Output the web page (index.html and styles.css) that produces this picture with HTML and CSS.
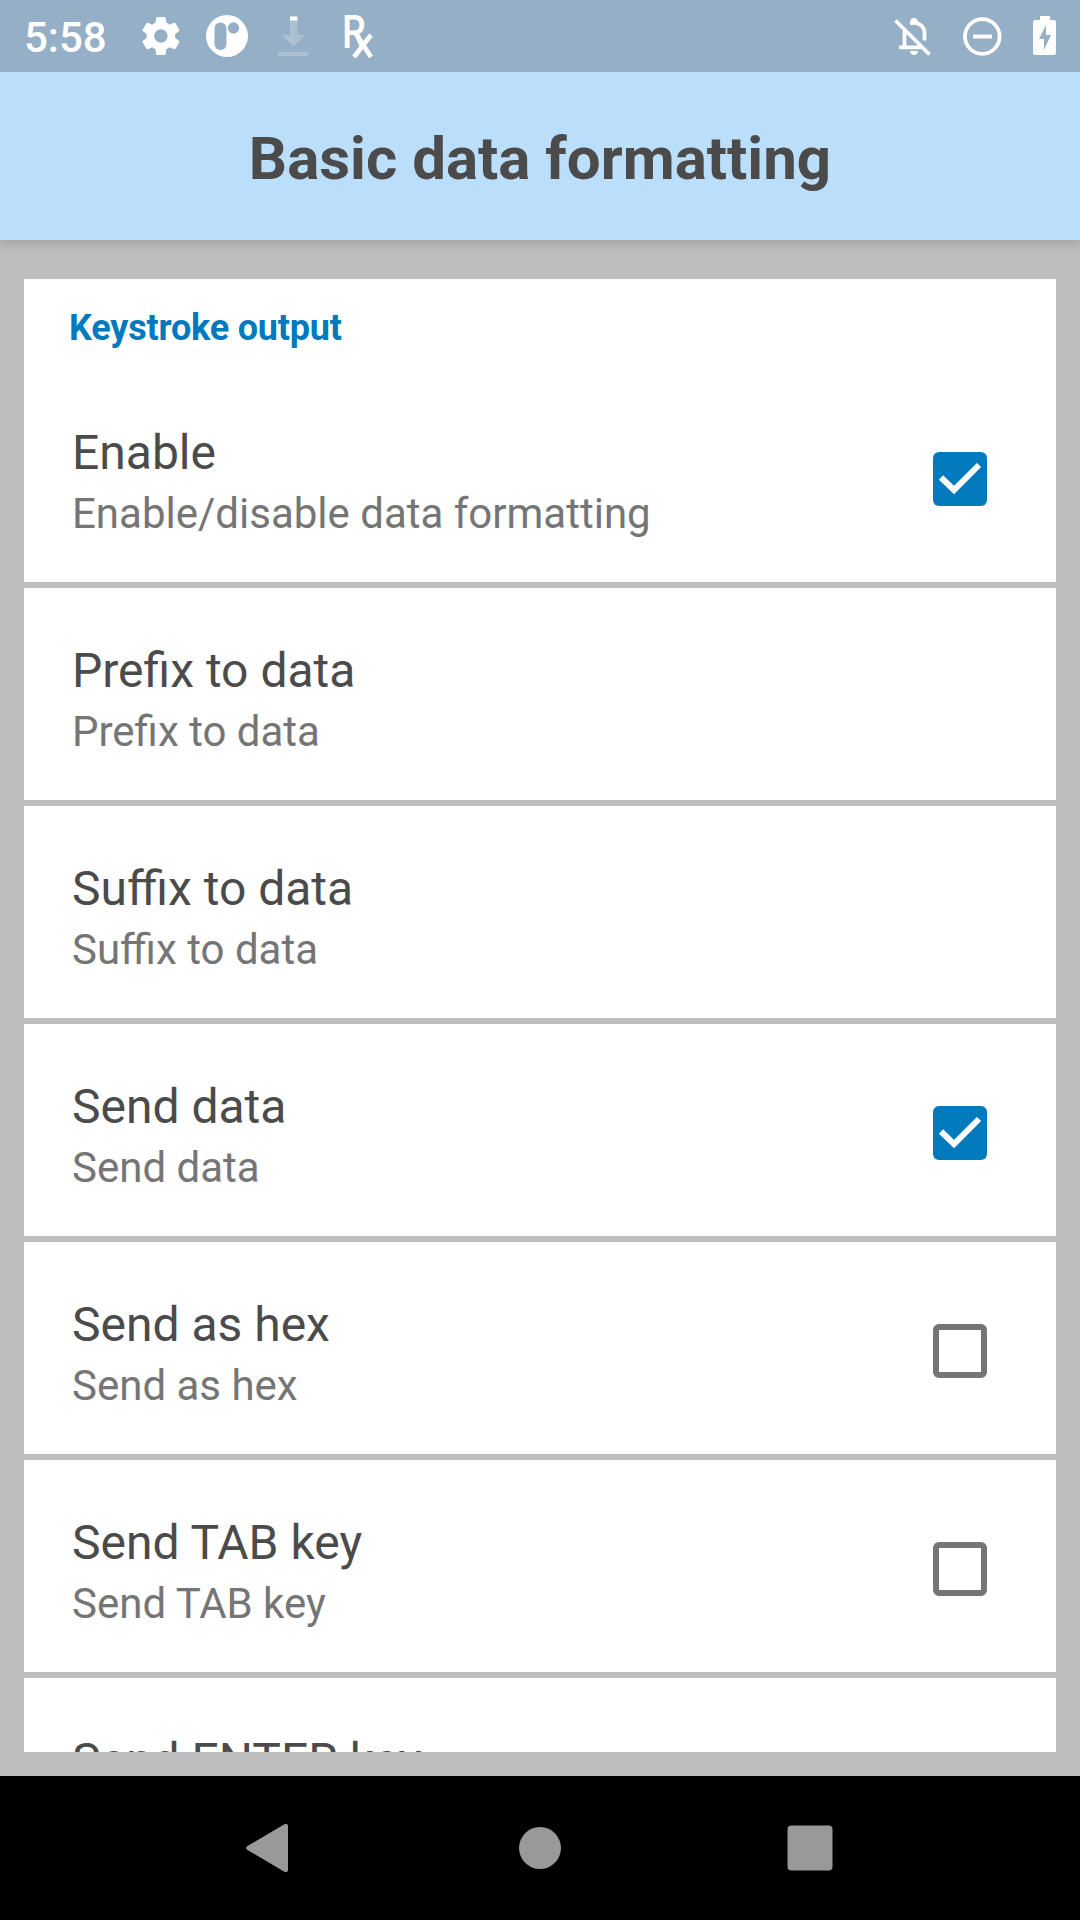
FILE: index.html
```html
<!DOCTYPE html>
<html lang="en">
<head>
<meta charset="utf-8">
<title>Basic data formatting</title>
<link rel="stylesheet" href="styles.css">
</head>
<body>
<div class="screen">
  <header class="status">
    <span class="clock">5:58</span>
    <svg class="tray" width="250" height="72" viewBox="132 0 250 72" aria-hidden="true">
      <path class="fill" transform="translate(138.1 13.2) scale(1.9)" d="M19.43 12.98c.04-.32.07-.64.07-.98s-.03-.66-.07-.98l2.11-1.65c.19-.15.24-.42.12-.64l-2-3.46c-.12-.22-.39-.3-.61-.22l-2.49 1c-.52-.4-1.08-.73-1.69-.98l-.38-2.65C14.46 2.18 14.25 2 14 2h-4c-.25 0-.46.18-.49.42l-.38 2.65c-.61.25-1.17.59-1.69.98l-2.49-1c-.23-.09-.49 0-.61.22l-2 3.46c-.13.22-.07.49.12.64l2.11 1.65c-.04.32-.07.65-.07.98s.03.66.07.98l-2.11 1.65c-.19.15-.24.42-.12.64l2 3.46c.12.22.39.3.61.22l2.49-1c.52.4 1.08.73 1.69.98l.38 2.65c.03.24.24.42.49.42h4c.25 0 .46-.18.49-.42l.38-2.65c.61-.25 1.17-.59 1.69-.98l2.49 1c.23.09.49 0 .61-.22l2-3.46c.12-.22.07-.49-.12-.64l-2.11-1.65zM12 15.5c-1.93 0-3.5-1.57-3.5-3.5s1.57-3.5 3.5-3.5 3.5 1.57 3.5 3.5-1.57 3.5-3.5 3.5z"/>
      <circle class="fill" cx="227" cy="36" r="21"/>
      <rect class="hole" x="214.5" y="22.5" width="12" height="27.5" rx="6"/>
      <circle class="hole" cx="233.5" cy="28" r="5.7"/>
      <path class="faint" d="M290 20h7.500v15h7.500L293.500 46 282 35h8zM278.500 52h29.500v4h-29.500z"/>
      <path class="fill" d="M290 16.500h7.500v4H290z"/>
      <text class="rx" x="342" y="48" font-size="46" textLength="24" lengthAdjust="spacingAndGlyphs">R</text>
      <path class="cross" d="m354.500 31.500 16.500 25.500M371 35l-17 22"/>
    </svg>
    <svg class="tray-end" width="180" height="72" viewBox="890 0 180 72" aria-hidden="true">
      <path class="line" d="M904.500 47V33q0-2 .8-4M899 47.300h23M910 23.500c9-2.500 14.500 3 14.500 10v7"/>
      <path class="line" d="m895.500 20.500 34 34"/>
      <path class="fill" d="M910.500 23v-2a3.500 3 0 0 1 7 0v3zM910 51h8q-.5 4-4 4t-4-4z"/>
      <circle class="line" cx="982.3" cy="36.5" r="17.3"/>
      <path class="fill" d="M973 34.500h19v4h-19z"/>
      <path class="fill" fill-rule="evenodd" d="M1040 16h10v4h4q2 0 2 2v31q0 2-2 2h-19q-2 0-2-2V22q0-2 2-2h5zM1046 25l-7 14h5v11l7-15h-5z"/>
    </svg>
  </header>
  <div class="appbar"><h1 class="heading">Basic data formatting</h1></div>
  <main class="content">
    <div class="list">
      <section class="card">
        <h2 class="group">Keystroke output</h2>
        <div class="item"><div class="label"><div class="name">Enable</div><div class="note">Enable/disable data formatting</div></div>
          <svg class="check on" viewBox="0 0 54 54"><path d="m8 25.500 13 12.500 25-25"/></svg></div>
      </section>
      <section class="card"><div class="item"><div class="label"><div class="name">Prefix to data</div><div class="note">Prefix to data</div></div></div></section>
      <section class="card"><div class="item"><div class="label"><div class="name">Suffix to data</div><div class="note">Suffix to data</div></div></div></section>
      <section class="card"><div class="item"><div class="label"><div class="name">Send data</div><div class="note">Send data</div></div>
        <svg class="check on" viewBox="0 0 54 54"><path d="m8 25.500 13 12.500 25-25"/></svg></div></section>
      <section class="card"><div class="item"><div class="label"><div class="name">Send as hex</div><div class="note">Send as hex</div></div><span class="check off"></span></div></section>
      <section class="card"><div class="item"><div class="label"><div class="name">Send TAB key</div><div class="note">Send TAB key</div></div><span class="check off"></span></div></section>
      <section class="card"><div class="item"><div class="label"><div class="name">Send ENTER key</div></div></div></section>
    </div>
  </main>
  <nav class="nav">
    <svg class="key" viewBox="0 0 60 60"><path d="M7.500 28 44 6.500q4-2 4 2v43q0 4-4 2L7.500 32q-3-2 0-4z"/></svg>
    <svg class="key" viewBox="0 0 60 60"><circle cx="30" cy="30" r="21"/></svg>
    <svg class="key" viewBox="0 0 60 60"><rect x="7.5" y="7.5" width="45" height="45" rx="4"/></svg>
  </nav>
</div>
</body>
</html>
```
FILE: styles.css
```css
* { box-sizing: border-box; }
body { margin: 0; font-family: Roboto, sans-serif; }
.screen { width: 1080px; height: 1920px; display: flex; flex-direction: column; overflow: hidden; background: #bdbdbd; }

.status { flex: none; z-index: 1; height: 72px; display: flex; align-items: center; padding: 0 10px 0 24px; background: #95afc6; color: #fff; }
.clock { width: 108px; font-size: 42px; line-height: 72px; font-weight: 500; padding-top: 3px; white-space: nowrap; }
.tray { flex: none; }
.tray-end { flex: none; margin-left: auto; }
.fill { fill: #fff; }
.hole { fill: #95afc6; }
.faint { fill: #fff; opacity: .22; }
.line { fill: none; stroke: #fff; stroke-width: 3.8; }
.rx { fill: #fff; font-family: Roboto, sans-serif; font-weight: 500; }
.cross { fill: none; stroke: #fff; stroke-width: 4.6; }

.appbar { flex: none; height: 168px; display: flex; align-items: center; justify-content: center; background: #bbdefb; box-shadow: 0 2px 12px rgba(0, 0, 0, .2); }
.heading { margin: 0; padding-top: 6px; font-size: 60px; line-height: 72px; font-weight: 700; color: #4b4b4b; white-space: nowrap; }

.content { flex: 1; min-height: 0; padding: 39px 24px 24px; }
.list { height: 100%; overflow: hidden; display: flex; flex-direction: column; gap: 6px; }
.card { flex: none; background: #fff; }
.group { margin: 0; height: 91px; padding: 25px 0 0 45px; font-size: 36px; line-height: 48px; font-weight: 700; letter-spacing: -.2px; color: #007abd; }
.item { height: 212px; display: flex; align-items: flex-start; justify-content: space-between; padding: 0 69px 0 48px; }
.label { padding-top: 55px; white-space: nowrap; }
.name { font-size: 48px; line-height: 56px; color: #4b4b4b; }
.note { margin-top: 8px; font-size: 42px; line-height: 50px; color: #757575; }
.check { flex: none; width: 54px; height: 54px; margin-top: 82px; border-radius: 6px; }
.on { background: #007abd; }
.on path { fill: none; stroke: #fff; stroke-width: 6; }
.off { border: 6px solid #757575; }

.nav { flex: none; height: 144px; display: flex; justify-content: center; align-items: center; gap: 210px; background: #000; }
.key { width: 60px; height: 60px; fill: #999; }
```
